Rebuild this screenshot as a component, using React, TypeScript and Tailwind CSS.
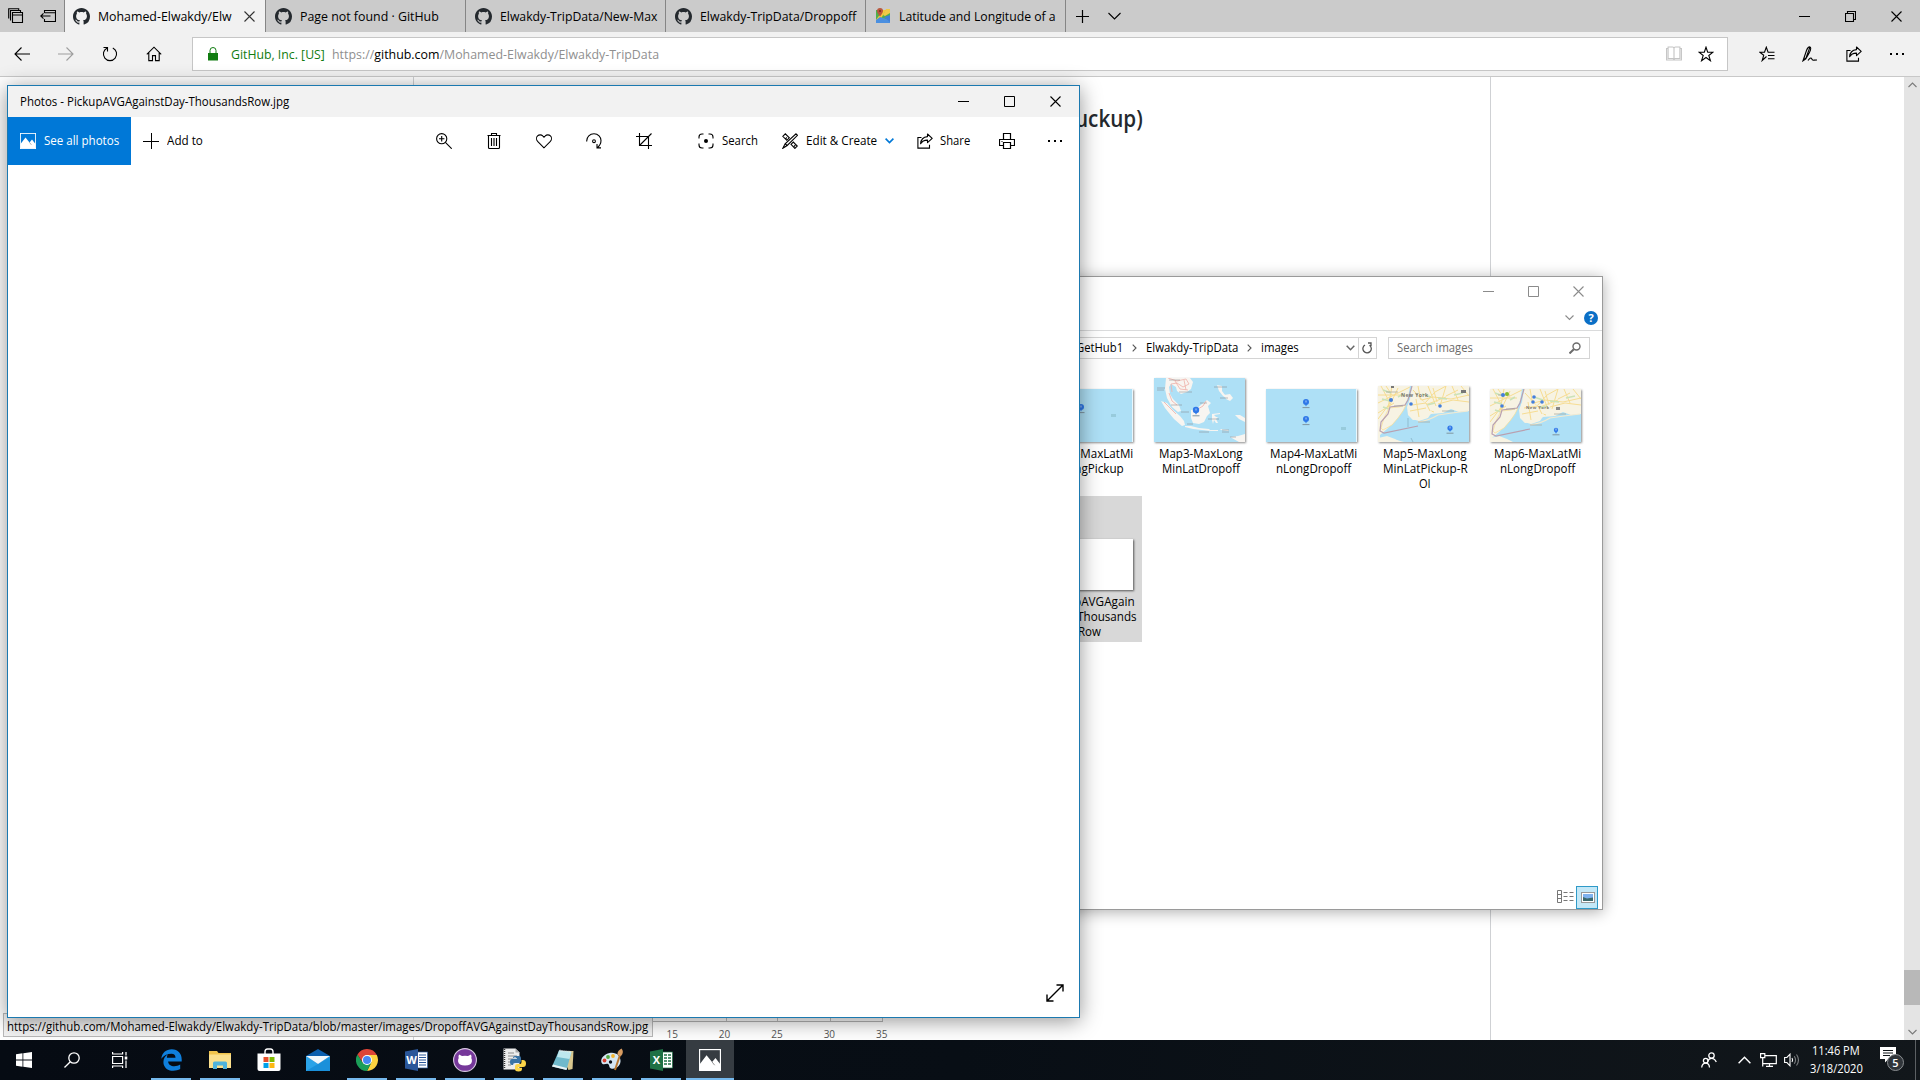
import React, { useLayoutEffect, useRef, useState } from "react";

function Fit({ w, className = "", children }: { w: number; className?: string; children: React.ReactNode }) {
  const ref = useRef<HTMLSpanElement>(null);
  const [scale, setScale] = useState(1);
  useLayoutEffect(() => {
    const measure = () => {
      if (ref.current && ref.current.offsetWidth > 0) setScale(w / ref.current.offsetWidth);
    };
    measure();
    document.fonts?.ready.then(measure);
  }, [w]);
  return (
    <span className={"inline-block shrink-0 whitespace-nowrap " + className} style={{ width: w }}>
      <span ref={ref} className="inline-block origin-left" style={{ transform: `scaleX(${scale})` }}>
        {children}
      </span>
    </span>
  );
}

function Ico({
  w = 16,
  h = 16,
  sw = 1.1,
  className = "",
  children,
}: {
  w?: number;
  h?: number;
  sw?: number;
  className?: string;
  children: React.ReactNode;
}) {
  return (
    <svg
      width={w}
      height={h}
      viewBox={`0 0 ${w} ${h}`}
      fill="none"
      stroke="currentColor"
      strokeWidth={sw}
      className={"shrink-0 " + className}
    >
      {children}
    </svg>
  );
}

const GitHubMark = () => (
  <svg width="17" height="17" viewBox="0 0 16 16" fill="#24292e" className="shrink-0">
    <path d="M8 0C3.58 0 0 3.58 0 8c0 3.54 2.29 6.53 5.47 7.59.4.07.55-.17.55-.38 0-.19-.01-.82-.01-1.49-2.01.37-2.53-.49-2.69-.94-.09-.23-.48-.94-.82-1.13-.28-.15-.68-.52-.01-.53.63-.01 1.08.58 1.23.82.72 1.21 1.87.87 2.33.66.07-.52.28-.87.51-1.07-1.78-.2-3.64-.89-3.64-3.95 0-.87.31-1.59.82-2.15-.08-.2-.36-1.02.08-2.12 0 0 .67-.21 2.2.82.64-.18 1.32-.27 2-.27s1.36.09 2 .27c1.53-1.04 2.2-.82 2.2-.82.44 1.1.16 1.92.08 2.12.51.56.82 1.27.82 2.15 0 3.07-1.87 3.75-3.65 3.95.29.25.54.73.54 1.48 0 1.07-.01 1.93-.01 2.2 0 .21.15.46.55.38A8.01 8.01 0 0 0 16 8c0-4.42-3.58-8-8-8z" />
  </svg>
);

const MapsIcon = () => (
  <svg width="16" height="16" viewBox="0 0 16 16" className="shrink-0">
    <path d="M1 2h14v13H1z" fill="#4fae4a" />
    <path d="M8 2h3L4 14l-3-1v-1z" fill="#f4c63d" />
    <path d="M1 12l4-3 10 3v3H1z" fill="#4a8fe0" />
    <path d="M9 9l6-2v7z" fill="#3f7fd6" />
    <path d="M11 1h4v4l-5 3-2-1z" fill="#f0c948" />
    <path d="M5 0a3 3 0 0 1 3 3c0 2-3 5.500-3 5.500S2 5 2 3a3 3 0 0 1 3-3z" fill="#b9573c" />
    <circle cx="5" cy="3" r="1" fill="#7b2b1c" />
  </svg>
);

const ShareIcon = () => (
  <Ico>
    <path d="M4.500 4.500H.9v10.600h11.600v-3.400" />
    <path d="M10.500 1l4.700 4.300-4.700 4.300V7.100C7.300 7 5.100 8.200 3.600 10.700 3.900 6.800 6.300 4 10.500 3.600z" strokeLinejoin="round" />
  </Ico>
);

const Dots = ({ className = "" }: { className?: string }) => (
  <svg width="16" height="16" viewBox="0 0 16 16" className={"shrink-0 " + className} fill="currentColor">
    <rect x="1" y="7" width="2" height="2" />
    <rect x="7" y="7" width="2" height="2" />
    <rect x="13" y="7" width="2" height="2" />
  </svg>
);

const Minimize = () => (
  <Ico w={11} h={11} sw={1}>
    <path d="M0 5.500h11" />
  </Ico>
);
const Maximize = () => (
  <Ico w={11} h={11} sw={1}>
    <path d="M.5.5h10v10H.5z" />
  </Ico>
);
const Close = () => (
  <Ico w={11} h={11}>
    <path d="M.5.5l10 10M10.500.5l-10 10" />
  </Ico>
);

function Tab({ icon, label, w }: { icon: React.ReactNode; label: string; w: number }) {
  return (
    <div className="flex h-8 w-[200px] shrink-0 items-center border-r border-[#858585] pl-[9px] text-[13px] text-black">
      {icon}
      <span className="ml-2 pt-px">
        <Fit w={w}>{label}</Fit>
      </span>
    </div>
  );
}

function TabBar() {
  return (
    <div className="flex h-8 items-center bg-[#cbcbcb]">
      <div className="flex h-8 w-[65px] shrink-0 items-center gap-4 border-r border-[#858585] pl-2">
        <Ico>
          <path d="M4.500 4.500h10v10h-10zM4.500 7h10M2.500 12.500v-10h10v2M.7 10.500V.7h10v2" />
        </Ico>
        <Ico>
          <path d="M4.500 5V2.500h11v11h-11V11M4.500 4.700h11M10.500 8H.8M3.500 5.300L.8 8l2.700 2.700" />
        </Ico>
      </div>
      <div className="flex h-8 w-[201px] shrink-0 items-center border-r border-[#858585] bg-[#f1f1f1] pl-2 text-[13px] text-black">
        <GitHubMark />
        <span className="ml-2 flex w-[135px] overflow-hidden pt-px">
          <Fit w={134}>Mohamed-Elwakdy/Elw</Fit>
        </span>
        <span className="ml-[11px] text-[#333]">
          <Close />
        </span>
      </div>
      <Tab icon={<GitHubMark />} label="Page not found · GitHub" w={139} />
      <Tab icon={<GitHubMark />} label="Elwakdy-TripData/New-Max" w={157} />
      <Tab icon={<GitHubMark />} label="Elwakdy-TripData/Droppoff" w={156} />
      <Tab icon={<MapsIcon />} label="Latitude and Longitude of a" w={157} />
      <Ico w={13} h={13} className="ml-[10px]" sw={1.2}>
        <path d="M6.500 0v13M0 6.500h13" />
      </Ico>
      <Ico w={13} h={8} className="ml-[19px]">
        <path d="M.5 1l6 6 6-6" />
      </Ico>
      <div className="ml-auto flex items-center gap-[35px] pr-[18px]">
        <Minimize />
        <Ico w={11} h={11}>
          <path d="M.5 2.500h8v8h-8zM2.500 2.500v-2h8v8h-2" />
        </Ico>
        <Close />
      </div>
    </div>
  );
}

const NavCell = ({ children, className = "w-11" }: { children: React.ReactNode; className?: string }) => (
  <div className={"flex shrink-0 items-center justify-center " + className}>{children}</div>
);

function AddressRow() {
  return (
    <div className="flex h-[45px] items-center border-b border-[#c8c8c8] bg-[#f1f1f1] text-black">
      <NavCell>
        <Ico w={16} h={14}>
          <path d="M16 7H1M7.500.5L1 7l6.500 6.500" />
        </Ico>
      </NavCell>
      <NavCell className="w-11 text-[#9d9d9d]">
        <Ico w={16} h={14}>
          <path d="M0 7h15M8.500.5L15 7l-6.500 6.500" />
        </Ico>
      </NavCell>
      <NavCell>
        <Ico>
          <path d="M5.200 2A6.600 6.600 0 1 0 10.800 2M1.500 1.500h4v4" />
        </Ico>
      </NavCell>
      <NavCell>
        <Ico>
          <path d="M.8 8.300L8 1.200l7.200 7.100M2.800 6.600v8h3.700v-5h3v5h3.700v-8" />
        </Ico>
      </NavCell>
      <div className="ml-4 flex h-[34px] w-[1536px] items-center border border-[#c6c6c6] bg-white text-[13px]">
        <svg width="10" height="14" viewBox="0 0 10 14" className="ml-[15px]">
          <path d="M2 6V3.500a3 3 0 0 1 6 0V6" fill="none" stroke="#107c10" strokeWidth="1" />
          <rect x="0" y="6" width="10" height="7.500" fill="#107c10" />
        </svg>
        <span className="ml-[13px] flex pt-px">
          <Fit w={93.5} className="text-[#107c10]">
            GitHub, Inc. [US]
          </Fit>
          <Fit w={327} className="ml-[7px] text-[#8f8f8f]">
            https://<span className="text-black">github.com</span>/Mohamed-Elwakdy/Elwakdy-TripData
          </Fit>
        </span>
        <div className="ml-auto flex items-center gap-4 pr-[13px]">
          <Ico className="text-[#c4c4c4]">
            <path d="M.6 2.500h1.500v-1.500h4.500c1 0 1.400.5 1.400 1.500 0-1 .4-1.500 1.400-1.500h4.500v1.500h1.500v11.500H.6zM8 2.500v11.500M2.100 2.500v10h4.500q1.400 0 1.400 1.200 0-1.200 1.400-1.200h4.500v-10" />
          </Ico>
          <Ico>
            <path d="M8 1.200l1.700 5h5.300l-4.200 3.300 1.600 5.200L8 11.500l-4.400 3.200 1.600-5.200L1 6.200h5.300z" />
          </Ico>
        </div>
      </div>
      <div className="ml-[17px] flex">
        <NavCell className="w-[43.500px]">
          <Ico>
            <path d="M7.500 10.500l-4.300 4 1.500-5.200L.8 6.200h4.700l1.800-5 1.800 5H15.500M9 9.500h6.500M9 12.800h6.500" />
          </Ico>
        </NavCell>
        <NavCell className="w-[43.500px]">
          <Ico>
            <path d="M1 14.800L4.500 4.500C5.500 1.700 7 .5 8 1s.7 3-.7 5.800L3.800 12.800 1 14.800zM3.800 12.800l-1.500-.8M8 1l-4 11M6 14.500c1.500-2.300 3-3.200 3.500-2 .4 1 .7 1.800 2 1.700 1-.1 1.500-.2 3.500-.2" />
          </Ico>
        </NavCell>
        <NavCell className="w-[43.500px]">
          <ShareIcon />
        </NavCell>
        <NavCell className="w-[43.500px]">
          <Dots />
        </NavCell>
      </div>
    </div>
  );
}

function Page() {
  return (
    <div className="flex min-h-0 flex-1 bg-white">
      <div className="w-[414px] shrink-0 border-r border-[#cfd1d4]" />
      <div className="flex w-[1077px] shrink-0 flex-col border-r border-[#cfd1d4]">
        <div className="mt-[23px] flex h-9 items-center pl-[661px] text-[24px] font-semibold text-[#24292e]">
          <Fit w={68}>uckup)</Fit>
        </div>
        <div className="mt-auto flex flex-col pl-[75px]">
          <div className="flex h-[14px] w-[394px] border-b border-[#b5b5b5]">
            <div className="w-[237px]" />
            <div className="w-[52px] border-x border-[#c0c0c0]" />
            <div className="w-[52px]" />
            <div className="w-[53px] border-x border-[#c0c0c0]" />
          </div>
          <div className="ml-[157px] flex h-[18px] pt-[3px] text-[10px] leading-[18px] text-[#555]">
            {["15", "20", "25", "30", "35"].map((n) => (
              <span key={n} className="w-[52.400px] shrink-0 text-center">
                {n}
              </span>
            ))}
          </div>
        </div>
      </div>
      <div className="ml-auto flex w-4 flex-col items-center bg-[#e4e4e4] text-[#7a7a7a]">
        <Ico w={9} h={6} className="mt-[5px]">
          <path d="M.5 5l4-4 4 4" />
        </Ico>
        <div className="mt-auto h-[35px] w-4 bg-[#b8b8b8]" />
        <Ico w={9} h={6} className="mt-[24px] mb-[5px]">
          <path d="M.5 1l4 4 4-4" />
        </Ico>
      </div>
    </div>
  );
}

/* ---------- Thumbnails ---------- */
const Pin = ({ x, y, r = 3 }: { x: number; y: number; r?: number }) => (
  <g>
    <circle cx={x} cy={y} r={r} fill="#2f78e8" />
    <path d={`M${x - 1} ${y + r - 0.5}h2l-1 2z`} fill="#2f78e8" />
    <path d={`M${x} ${y - 1.500}v2`} stroke="#cfe2ff" strokeWidth=".8" />
    <path d={`M${x - 3.500} ${y + r + 2.600}h7`} stroke="#7f95a0" strokeWidth="1" />
  </g>
);

const Ocean = ({ pins, mark }: { pins: number[][]; mark: number[] }) => (
  <svg width="91" height="53" viewBox="0 0 91 53" className="shadow-[1px_1px_2px_rgba(0,0,0,0.45)]">
    <rect width="91" height="53" fill="#aee0f6" />
    {pins.map(([x, y]) => (
      <Pin key={y} x={x} y={y} />
    ))}
    <rect x={mark[0]} y={mark[1]} width="5" height="3" fill="#98cbdc" />
    <path d="M90.500 0v53" stroke="#e8f7fd" />
  </svg>
);

const Indonesia = () => (
  <svg width="91" height="64" viewBox="0 0 91 64" className="shadow-[1px_1px_2px_rgba(0,0,0,0.45)]">
    <rect width="91" height="64" fill="#aee0f6" />
    <g fill="#f8f5f1">
      <path d="M12 0h24l3 4-2 7-4 3-6 2-4-3-1-4-5-3-2 3 1 7 3 5 6 6 2 6-3 1-6-5-5-9-2-9z" />
      <path d="M7 23l6 2 6 7 7 6 4 5 1 4-3 1-8-7-5-6-4-5z" />
      <path d="M37 32l5-1 6-5 5-4 4 3-3 3 2 7-3 3-3 6-5 2-6-1-2-5z" />
      <path d="M31 48l6 0 8 2 10 1 2 2-9-1-9-1-8-2zM58 36l8-1v1l-6 1 2 2 2 0-2 2 2 4-2 0-2-3-1 4-1-4zM63 7l5 1v5l3 4 1 3-3-2-4-5zM70 17l6-1 3 4-3 3-4-2zM81 37l5 0 5 3v4l-6-3zM56 52l8 0v1h-8zM66 51l9 1-1 1-7-1zM76 59l8-1 7-2v8h-6z" />
    </g>
    <path
      d="M14 0l9 3 9-2 3 5-6 3-6-4-6 1 1 8M21 3l5 8 8 1M30 2l2 10M44 31l5-3 3-5M15 15l3 8 5 4M10 24l12 12"
      fill="none"
      stroke="#efb0a8"
      strokeWidth=".8"
    />
    <path
      d="M15 2h11M25 14h13M17 27h11M46 25h7M60 9h13M66 20h8M33 46h6M45 54h10M68 52h7M68 54h7M54 41h11M27 34h8M3 10h8M3 12h7M76 59h6"
      stroke="#85868c"
      strokeWidth=".8"
      opacity=".65"
    />
    <Pin x={42} y={32} r={3.2} />
  </svg>
);

const NewYork = ({ h, small }: { h: number; small?: boolean }) => (
  <svg width="91" height={h} viewBox={`0 0 91 ${h}`} className="shadow-[1px_1px_2px_rgba(0,0,0,0.45)]">
    <rect width="91" height={h} fill="#f7f3e3" />
    <path
      d="M8 0l6 9M0 9h27M0 17l20-10 14-7M3 0l9 17-12 16M0 27l16-10M14 0l-4 22M20 2l-9 19M35 4l12 13 10-11 11-6M40 15l15-4 18 2 18-4M33 20l17-2 18-7M55 2l4 14M50 0l8 20M68 0l-6 20M74 0l6 14M80 4l-12 6M40 0l4 22 12 4M60 18l15-4 16 2M83 0l8 10"
      fill="none"
      stroke="#f6dc92"
      strokeWidth="1"
    />
    <path d="M5 4l8 3M4 13l8 2M20 11l5-3M44 8l9 3M60 12l9 1M76 9l9-2M49 19l8-2M5 21l6 2" stroke="#cbe2b8" strokeWidth="1.600" />
    <path
      d={`M32 0l-2 12-4 9-6 7-3 7-8 8-7 6v5l6 1 10-1 8 2h65V25l-10 1-8-3-8 4-12 1-9 5-9 1-5-5-1-8 3-8 2-13z`}
      fill="#aee0f6"
    />
    <path d="M11 22l10-1 7-2-3 6-5 7-6 7-9 5-2-2 3-10z" fill="#f7f3e3" stroke="#f6dc92" strokeWidth=".7" />
    <path d="M31 15l7-4 10 6 6 9-4 6-9 3-7-2-3-8z" fill="#f7f3e3" />
    <path d="M34 19l14-2 4 8M38 13l3 18M32 25l16-3" fill="none" stroke="#f6dc92" strokeWidth="1" />
    <path d="M40 36q10-1 20-7l14-2 16-2" stroke="#f3ead0" strokeWidth="1.200" fill="none" />
    <path d={`M0 ${h - 4}l9-2 8 3 6 3H0z`} fill="#f7f3e3" />
    <path d="M34 0l-4 14-3 5-15 2-2 7-7 8-1 9 4 2 34-7" fill="none" stroke="#b9a0b0" strokeWidth="1.200" />
    {!small && <path d="M30 32v9M33 52l2 4" stroke="#82aebf" strokeWidth=".7" />}
    <path d="M8 6h12M16 20h9M40 36h12M64 25h12" stroke="#a5a39a" strokeWidth=".7" />
    <g fill="#447fdc">
      <circle cx="13" cy={small ? 6 : 14} r="2" />
      <circle cx={small ? 12 : 33} cy={small ? 17 : 18} r="1.800" />
      <circle cx={small ? 44 : 62} cy={small ? 8 : 20} r="1.800" />
      {small && <circle cx="43" cy="13" r="1.800" />}
      {small && <circle cx="52" cy="13" r="1.800" />}
    </g>
    {small ? <circle cx="17" cy="5" r="2" fill="#83b92e" /> : <path d="M83 4h5v3h-5zM13 0h3v2h-3z" fill="#777" />}
    {small && <path d="M66 18h4v3h-4z" fill="#888" />}
    <text
      x={small ? 36 : 23}
      y={small ? 20 : 11}
      fontSize={small ? 4.2 : 5}
      fontFamily="Open Sans"
      fontWeight="700"
      letterSpacing=".4"
      fill="#77746e"
    >
      New York
    </text>
    <Pin x={small ? 66 : 72} y={small ? 41 : 42} r={small ? 2.2 : 2.6} />
  </svg>
);

type FileItem = { thumb: React.ReactNode; lines: [string, number][]; selected?: boolean };

const files: FileItem[] = [
  { thumb: <Ocean pins={[[39, 18]]} mark={[69, 25]} />, lines: [["Map2-MaxLatMi", 87], ["nLongPickup", 70]] },
  { thumb: <Indonesia />, lines: [["Map3-MaxLong", 84], ["MinLatDropoff", 78]] },
  { thumb: <Ocean pins={[[40, 13], [40, 30]]} mark={[75, 38]} />, lines: [["Map4-MaxLatMi", 87], ["nLongDropoff", 75]] },
  { thumb: <NewYork h={56} />, lines: [["Map5-MaxLong", 84], ["MinLatPickup-R", 85], ["OI", 12]] },
  { thumb: <NewYork h={53} small />, lines: [["Map6-MaxLatMi", 87], ["nLongDropoff", 75]] },
];

const FileCell = ({ thumb, lines, selected }: FileItem) => (
  <div className={"flex w-[112px] shrink-0 flex-col items-center " + (selected ? "h-[146px]" : "h-[125px]")}>
    <div className={"flex items-end pr-[3px] " + (selected ? "h-[94px]" : "h-[71px]")}>{thumb}</div>
    <div className="mt-1 flex flex-col items-center text-[12px] leading-[15px]">
      {lines.map(([t, w]) => (
        <Fit key={t} w={w}>
          {t}
        </Fit>
      ))}
    </div>
  </div>
);

const Crumb = () => (
  <Ico w={5} h={8} className="text-[#555]">
    <path d="M.7.7L4 4 .7 7.300" />
  </Ico>
);

function Explorer() {
  return (
    <div className="absolute top-[276px] left-[1030px] flex h-[634px] w-[573px] flex-col border border-[#9a9a9a] bg-white text-[12px] text-black shadow-[0_2px_14px_rgba(0,0,0,0.32)]">
      <div className="flex h-7 items-center justify-end gap-[34px] pr-[18px] text-[#8b8b8b]">
        <Minimize />
        <Maximize />
        <Close />
      </div>
      <div className="flex h-[26px] items-center justify-end gap-[10px] border-b border-[#dadbdc] pr-[4px]">
        <Ico w={9} h={6} className="text-[#8b8b8b]">
          <path d="M.5.5l4 4 4-4" />
        </Ico>
        <span className="flex h-[14px] w-[14px] items-center justify-center rounded-full bg-[#0b6fc6] text-[11px] leading-none font-bold text-white">
          ?
        </span>
      </div>
      <div className="mt-[6px] flex h-[22px] items-center pr-3">
        <div className="flex h-[22px] w-[346px] items-center border border-[#d4d4d4] pl-[44px]">
          <Fit w={47}>GetHub1</Fit>
          <span className="ml-[9px] flex">
            <Crumb />
          </span>
          <Fit w={92} className="ml-[9px]">
            Elwakdy-TripData
          </Fit>
          <span className="ml-[9px] flex">
            <Crumb />
          </span>
          <Fit w={38} className="ml-[9px]">
            images
          </Fit>
          <Ico w={9} h={6} sw={1.5} className="mr-[3px] ml-auto text-[#666]">
            <path d="M.7.700l3.800 4 3.800-4" />
          </Ico>
          <div className="flex h-[20px] w-[18px] items-center justify-center border-l border-[#d4d4d4] text-[#555]">
            <Ico w={11} h={12} sw={1.3}>
              <path d="M3.500 2.500A4.200 4.200 0 1 0 8 2.700M6.500.500H9.500V3.500" transform="translate(-.5 .5)" />
            </Ico>
          </div>
        </div>
        <div className="ml-auto flex h-[22px] w-[202px] items-center justify-between border border-[#d4d4d4] pr-2 pl-2 text-[#6b6b6b]">
          <Fit w={76}>Search images</Fit>
          <Ico w={12} h={12} sw={1.4}>
            <path d="M4.800 7.200L.5 11.500" strokeWidth="2" />
            <circle cx="7.500" cy="4.500" r="3.500" />
          </Ico>
        </div>
      </div>
      <div className="mt-[12px] flex pl-[2px]">
        {files.map((f) => (
          <FileCell key={f.lines[0][0]} {...f} />
        ))}
      </div>
      <div className="flex pl-[6px]">
        <div className="flex w-[105px] justify-center bg-[#d8d8d8]">
          <FileCell
            selected
            thumb={<div className="h-[51px] w-[90px] bg-white shadow-[1px_1px_2px_rgba(0,0,0,0.6)]" />}
            lines={[["PickupAVGAgain", 90], ["stDay-Thousands", 94], ["Row", 23]]}
          />
        </div>
      </div>
      <div className="mt-auto flex items-center justify-end pr-1">
        <Ico w={17} h={13} sw={1} className="mr-[2px] mb-[2px] text-[#777]">
          <path d="M.5.5h4v12h-4zM.5 4.500h4M.5 8.500h4M6.500 2.500h4M12.500 2.500h4M6.500 6.500h4M12.500 6.500h4M6.500 10.500h4M12.500 10.500h4" />
        </Ico>
        <div className="flex h-[23px] w-[22px] items-center justify-center border border-[#2f9ac8] bg-[#c4e8f7] pl-[2px]">
          <svg width="14" height="11" viewBox="0 0 14 11">
            <rect x=".5" y=".5" width="13" height="10" fill="#fff" stroke="#999" />
            <rect x="2" y="2" width="10" height="7" fill="#7fb2ee" />
            <path d="M2 5l4 1.500 6-1V9H2z" fill="#3c6a6d" />
          </svg>
        </div>
      </div>
    </div>
  );
}

const PhotoGlyph = ({ size = 16 }: { size?: number }) => (
  <svg width={size} height={size} viewBox="0 0 16 16" className="shrink-0">
    <rect x=".4" y=".4" width="15.200" height="15.200" fill="none" stroke="#fff" strokeWidth=".9" />
    <path d="M.5 11L5.500 4.500l4 5L12 6.500l3.500 4.500v4.500H.5z" fill="#fff" />
    <path d="M9.400 9.300l2 2.500" stroke="#666" strokeWidth=".5" />
  </svg>
);

function PhotosWindow() {
  return (
    <div className="absolute top-[85px] left-[7px] flex h-[933px] w-[1073px] flex-col border border-[#1b79b0] bg-white text-[12px] text-black shadow-[0_3px_20px_rgba(0,0,0,0.42)]">
      <div className="flex h-[31px] shrink-0 items-center bg-[#f2f2f2] pl-3">
        <Fit w={269}>Photos - PickupAVGAgainstDay-ThousandsRow.jpg</Fit>
        <div className="ml-auto flex items-center gap-[35px] pr-[18px] pb-px">
          <Minimize />
          <Maximize />
          <Close />
        </div>
      </div>
      <div className="flex h-12 shrink-0 items-center">
        <div className="flex h-12 w-[123px] shrink-0 items-center bg-[#0078d7] pl-3 text-white">
          <PhotoGlyph />
          <Fit w={75} className="ml-2">
            See all photos
          </Fit>
        </div>
        <Ico className="ml-3" sw={1}>
          <path d="M8.500 0v16M0 8.500h16" />
        </Ico>
        <Fit w={36} className="ml-2">
          Add to
        </Fit>
        <div className="ml-[216px] flex">
          <NavCell className="w-[50px]">
            <Ico>
              <circle cx="5.700" cy="5.700" r="5.100" />
              <path d="M9.400 9.400l6.300 6.300M3 5.700h5.400M5.700 3v5.400" />
            </Ico>
          </NavCell>
          <NavCell className="w-[50px]">
            <Ico>
              <path d="M1.500 2.500h13M5.500 2.500v-2h5v2M2.500 2.500v12q0 1 1 1h9q1 0 1-1v-12M5.500 5v8M8 5v8M10.500 5v8" />
            </Ico>
          </NavCell>
          <NavCell className="w-[50px]">
            <Ico>
              <path d="M8 14.800L1.600 8.300C.2 6.800.2 4.300 1.600 2.900s3.800-1.400 5.100 0L8 4.200l1.300-1.300c1.300-1.400 3.700-1.400 5.100 0s1.400 3.900 0 5.400z" />
            </Ico>
          </NavCell>
          <NavCell className="w-[50px]">
            <Ico>
              <path d="M.7 8.500C.5 3.500 4 .8 8 .8c4.200 0 7 3.200 7 6.800 0 3.200-1.600 5.500-3.700 7.300M15 14.900h-4v-4" />
              <circle cx="8" cy="8.200" r="1.400" />
            </Ico>
          </NavCell>
          <NavCell className="w-[50px]">
            <Ico>
              <path d="M3.500 0v12.500H16M0 3.500h12.500V16M3.500 12.500L15.500.5" />
            </Ico>
          </NavCell>
        </div>
        <Ico className="ml-[29px]">
          <path d="M5.500 1H4Q1 1 1 4v1.500M10.500 1H12q3 0 3 3v1.500M1 10.500V12q0 3 3 3h1.500M15 10.500V12q0 3-3 3h-1.500" />
          <circle cx="8" cy="8" r="2" fill="currentColor" stroke="none" />
        </Ico>
        <Fit w={36} className="ml-2">
          Search
        </Fit>
        <Ico className="ml-6">
          <path d="M14 .8l1.500 1.500L5.200 12.500.8 15.300l2.300-4.500zM3.100 10.800l2.100 1.700M.8 3.300L3.300.8l4 4-2.500 2.500zM9 11.300L11.300 9l4 4-2.400 2.400zM3.500 5.800l1.300-1.300M12 13.500l1.300-1.300" />
        </Ico>
        <Fit w={71} className="ml-2">
          Edit &amp; Create
        </Fit>
        <Ico w={9} h={6} sw={1.600} className="ml-2 text-[#0078d7]">
          <path d="M.6.600l3.900 4 3.900-4" />
        </Ico>
        <span className="ml-[23px] flex">
          <ShareIcon />
        </span>
        <Fit w={30} className="ml-[7px]">
          Share
        </Fit>
        <Ico className="ml-[29px]" sw={1.2}>
          <path d="M4.500 6.500v-6h7v6M4.500 12.500h-4v-6h15v6h-4M4.500 9.500h7v6h-7zM2.500 8.500h1" />
        </Ico>
        <Dots className="ml-8" />
      </div>
      <div className="flex flex-1 items-end justify-end pr-[15px] pb-[15px]">
        <Ico w={18} h={18} sw={1.4}>
          <path d="M1 17L17 1M10.500 1H17v6.500M1 10.500V17h6.500" />
        </Ico>
      </div>
    </div>
  );
}

/* ---------- Taskbar ---------- */
const EdgeIcon = () => (
  <svg width="21" height="22" viewBox="0 0 21 22">
    <path
      d="M.3 9.700C.9 4 5 .2 10.800.2c6.200 0 9.900 4.500 9.900 10v2.300H7.100c.2 3.200 2.900 4.800 6.200 4.800 2.100 0 4.200-.6 5.900-1.700v4.500c-2 1.200-4.500 1.700-7 1.700C6.400 21.800 2.400 18.300 2.400 13c0-3.500 1.900-6.500 5-8.100-1.200 1-1.500 2.300-1.500 3.800h8.600c0-2.500-1.300-4-4-4C6.300 4.700 2.300 6.600.3 9.700z"
      fill="#0f7fdc"
    />
  </svg>
);
const FolderIcon = () => (
  <svg width="22" height="18" viewBox="0 0 22 18">
    <path d="M0 0h8l1.500 2H22v15H0z" fill="#f1c44c" />
    <path d="M0 3.500h22V17H0z" fill="#fbe08d" />
    <path d="M4 18v-6q0-1.500 1.500-1.500h11Q18 10.500 18 12v6h-4v-3.500H8V18z" fill="#4fb3dc" />
  </svg>
);
const StoreIcon = () => (
  <svg width="24" height="24" viewBox="0 0 24 24">
    <path d="M8 6V3.800Q8 1 10.500 1h3Q16 1 16 3.800V6" fill="none" stroke="#fff" strokeWidth="1.400" />
    <path d="M.5 5.500h23V21q0 2-2 2h-19q-2 0-2-2z" fill="#fff" />
    <path d="M6.500 9h5v5h-5z" fill="#e5502c" />
    <path d="M12.500 9h5v5h-5z" fill="#7fba00" />
    <path d="M6.500 15h5v5h-5z" fill="#00a0ea" />
    <path d="M12.500 15h5v5h-5z" fill="#fcb813" />
  </svg>
);
const MailIcon = () => (
  <svg width="24" height="22" viewBox="0 0 24 22">
    <path d="M0 7l12-7 12 7v15H0z" fill="#0c5fae" />
    <path d="M0 7l12 8L24 7v15H0z" fill="#2ba3e8" />
    <path d="M0 22L24 8v14z" fill="#1a90da" />
    <path d="M0 7h24l-12 8z" fill="#f2f8fc" />
  </svg>
);
const ChromeIcon = () => (
  <svg width="22" height="22" viewBox="0 0 22 22">
    <path d="M11 6h9.800A11 11 0 0 1 11 22l4.300-8.500z" fill="#fdd23f" />
    <path d="M11 11l4.300 2.500L11 22A11 11 0 0 1 1.470 5.500L6.700 13.500z" fill="#1b9e58" />
    <path d="M1.470 5.500A11 11 0 0 1 20.800 6H11L6.700 13.500z" fill="#dc4437" />
    <circle cx="11" cy="11" r="5" fill="#fff" />
    <circle cx="11" cy="11" r="4" fill="#4587f3" />
  </svg>
);
const OfficeIcon = ({ letter }: { letter: "W" | "X" }) => {
  const c = letter === "W" ? "#2a5699" : "#1e7145";
  return (
    <svg width="23" height="22" viewBox="0 0 23 22">
      <rect x="11" y="3" width="11.500" height="16" fill="#fff" stroke={c} strokeWidth=".7" />
      {letter === "W" ? (
        <path d="M14 6h7M14 8.500h7M14 11h7M14 13.500h7M14 16h7" stroke={c} />
      ) : (
        <path d="M14 6h3M18 6h3M14 9h3M18 9h3M14 12h3M18 12h3M14 15h3M18 15h3" stroke={c} strokeWidth="1.600" />
      )}
      <path d="M0 2.500L13 0v22L0 19.500z" fill={c} />
      <text x="6.500" y="15" fontSize="11" fontWeight="700" textAnchor="middle" fill="#fff" fontFamily="Open Sans">
        {letter}
      </text>
    </svg>
  );
};
const GhDesktopIcon = () => (
  <svg width="24" height="24" viewBox="0 0 24 24">
    <circle cx="12" cy="12" r="11.400" fill="#76389a" stroke="#d9c9e2" strokeWidth="1.100" />
    <path d="M6 6.500l3 1.500q3-.7 6 0l3-1.500q.9 2 .3 3.500.9 1.500.6 3.500-.5 4-6.900 4t-6.900-4q-.3-2 .6-3.500-.6-1.500.3-3.500z" fill="#fff" />
  </svg>
);
const PythonIcon = () => (
  <svg width="23" height="24" viewBox="0 0 23 24">
    <path d="M.5.500h12l4 4v17H.5z" fill="#ececec" />
    <path d="M12.500.500v4h4z" fill="#aaa" />
    <path d="M1.500 1v20" stroke="#333" strokeWidth="1.500" strokeDasharray="1 1" />
    <path d="M5 5h6M5 8h9M5 11h5M5 14h3M5 17h3" stroke="#8a8a8a" />
    <path d="M12 8h4q2 0 2 2v3q0 2-2 2h-4q-2 0-2 2H9q-2 0-2-3t2-3h5v-.7h-4V10q0-2 2-2z" fill="#3a73a6" />
    <path d="M18.500 12H20q3 0 3 3.500T20 19h-5v.7h4V21q0 2.500-3.500 2.500T12 21v-2.500q0-2.500 2-2.500h3q1.500 0 1.500-2z" fill="#fcd548" />
    <circle cx="12" cy="9.800" r=".7" fill="#fff" />
  </svg>
);
const NotepadIcon = () => (
  <svg width="24" height="24" viewBox="0 0 24 24">
    <path d="M8.500 3l14 0-1 18-4 1z" fill="#d8c78e" />
    <path d="M8 2.500L20.500 4 15.500 22 1 18.500z" fill="#6fb9cb" />
    <path d="M8 2.500L20.500 4l-2 7L6 9z" fill="#bde7ee" />
    <path d="M1 18.500L15.500 22l.5-2L2 16.500z" fill="#e8f2f4" />
    <path d="M8.500 2.500l12 1.400" stroke="#f4f4f4" strokeWidth="1.600" strokeDasharray="1 1" />
  </svg>
);
const PaintIcon = () => (
  <svg width="24" height="24" viewBox="0 0 24 24">
    <path d="M9.500 5C16 3.500 21 8 20.500 13.500 20 19 15 21.500 11 20.500c-2.500-.8-1-3.500-3-4.500-2-.7-4 1.500-6-.5C-.5 12 3 6.500 9.500 5z" fill="#d5e6f3" />
    <circle cx="4.500" cy="12.500" r="1.900" fill="#d9402f" />
    <circle cx="8" cy="9" r="1.900" fill="#50a83d" />
    <circle cx="13" cy="8" r="1.900" fill="#f1b32f" />
    <circle cx="10.500" cy="14" r="1.700" fill="#0a0f18" />
    <path d="M15 22l5-15" stroke="#b9772f" strokeWidth="2" />
    <path d="M17.500 7q-.5-4 4-6.500 3 4-.5 7.500z" fill="#d89c61" />
  </svg>
);

const taskApps: { name: string; icon: React.ReactNode; running: boolean }[] = [
  { name: "edge", icon: <EdgeIcon />, running: true },
  { name: "explorer", icon: <FolderIcon />, running: true },
  { name: "store", icon: <StoreIcon />, running: false },
  { name: "mail", icon: <MailIcon />, running: false },
  { name: "chrome", icon: <ChromeIcon />, running: true },
  { name: "word", icon: <OfficeIcon letter="W" />, running: true },
  { name: "github", icon: <GhDesktopIcon />, running: true },
  { name: "python", icon: <PythonIcon />, running: true },
  { name: "notepad", icon: <NotepadIcon />, running: true },
  { name: "paint", icon: <PaintIcon />, running: true },
  { name: "excel", icon: <OfficeIcon letter="X" />, running: true },
];

function Taskbar() {
  return (
    <div className="relative z-10 flex h-10 shrink-0 items-center bg-gradient-to-r from-[#060b13] via-[#080e15] to-[#12171b] text-white">
      <NavCell className="w-12">
        <svg width="16" height="16" viewBox="0 0 16 16" fill="#fff">
          <path d="M0 2.200l6.500-.9v6.200H0zM7.300 1.200L16 0v7.500H7.300zM0 8.400h6.500v6.300L0 13.800zM7.300 8.400H16V16l-8.700-1.200z" />
        </svg>
      </NavCell>
      <NavCell className="w-12">
        <Ico sw={1.3}>
          <circle cx="10" cy="6" r="5.200" />
          <path d="M6.300 9.700L.5 15.500" />
        </Ico>
      </NavCell>
      <NavCell className="w-12">
        <Ico sw={1.2}>
          <path d="M.6 4.500h10v7H.6zM.6 0v2h10V0M.6 16v-2h10v2M14 0v3.500M14 8.500V16" />
          <path d="M12.700 4.500h2.600v3h-2.600z" fill="currentColor" stroke="none" />
        </Ico>
      </NavCell>
      <div className="ml-[7px] flex gap-[9px]">
        {taskApps.map((a) => (
          <div
            key={a.name}
            className={
              "flex h-10 w-10 items-center justify-center border-y-2 border-t-transparent " +
              (a.running ? "border-b-[#76b9ed]" : "border-b-transparent")
            }
          >
            {a.icon}
          </div>
        ))}
      </div>
      <div className="ml-[5px] flex h-10 w-12 items-center justify-center border-y-2 border-t-[#363c42] border-b-[#76b9ed] bg-[#363c42]">
        <PhotoGlyph size={22} />
      </div>
      <div className="ml-auto flex items-center">
        <Ico sw={1.3}>
          <circle cx="10.500" cy="3.500" r="2.700" />
          <path d="M6.800 9.500Q7.500 6.300 10.500 6.300T15.300 10" />
          <circle cx="4.700" cy="8.700" r="2.300" />
          <path d="M.7 15.500q.5-4.300 4-4.300t3.800 4.300" />
        </Ico>
        <Ico w={13} h={8} sw={1.4} className="ml-[21px]">
          <path d="M.6 7.300l5.900-6 5.900 6" />
        </Ico>
        <Ico w={17} h={14} sw={1.2} className="ml-[9px]">
          <path d="M5 2.600h11.300v8H3M.6.700h4.200v4H.6zM2.700 4.700v8.700M9.500 10.600v2.500M6 13.400h7" />
        </Ico>
        <Ico w={16} h={14} sw={1.1} className="ml-[7px]">
          <path d="M.6 4.500h2.300L6 1.200v11.600L2.900 9.500H.6z" />
          <path d="M8 5q1.300 2 0 4" />
          <path d="M10.300 3.300q2.500 3.700 0 7.400M12.500 1.500q4 5.500 0 11" opacity=".45" />
        </Ico>
        <div className="ml-[9px] flex w-[54px] flex-col items-center text-[12px] leading-[18px]">
          <Fit w={48}>11:46 PM</Fit>
          <Fit w={53}>3/18/2020</Fit>
        </div>
        <svg width="25" height="26" viewBox="0 0 25 26" className="ml-[17px]">
          <path d="M0 0h16v12H8.500L5 15.500V12H0z" fill="#fff" />
          <path d="M3 3.500h10M3 6h10M3 8.500h7" stroke="#11161a" />
          <circle cx="15.500" cy="15.500" r="8" fill="#30353a" stroke="#8b8f92" />
          <text x="15.500" y="19.500" fontSize="11" fontWeight="600" textAnchor="middle" fill="#fff" fontFamily="Open Sans">
            5
          </text>
        </svg>
        <div className="mr-1 ml-[10px] h-10 w-px bg-[#5c6063]" />
      </div>
    </div>
  );
}

export default function App() {
  return (
    <div className="relative flex h-[1080px] w-[1920px] flex-col overflow-hidden bg-white font-['Open_Sans','Noto_Sans',sans-serif]">
      <TabBar />
      <AddressRow />
      <Page />
      <Taskbar />
      <div className="absolute top-[1013px] left-[3px] flex h-6 w-[650px] items-center border border-[#b9b9b9] bg-[#f2f2f2] pt-[3px] pl-[3px] text-[12px] text-black">
        <Fit w={641}>https://github.com/Mohamed-Elwakdy/Elwakdy-TripData/blob/master/images/DropoffAVGAgainstDayThousandsRow.jpg</Fit>
      </div>
      <Explorer />
      <PhotosWindow />
    </div>
  );
}
